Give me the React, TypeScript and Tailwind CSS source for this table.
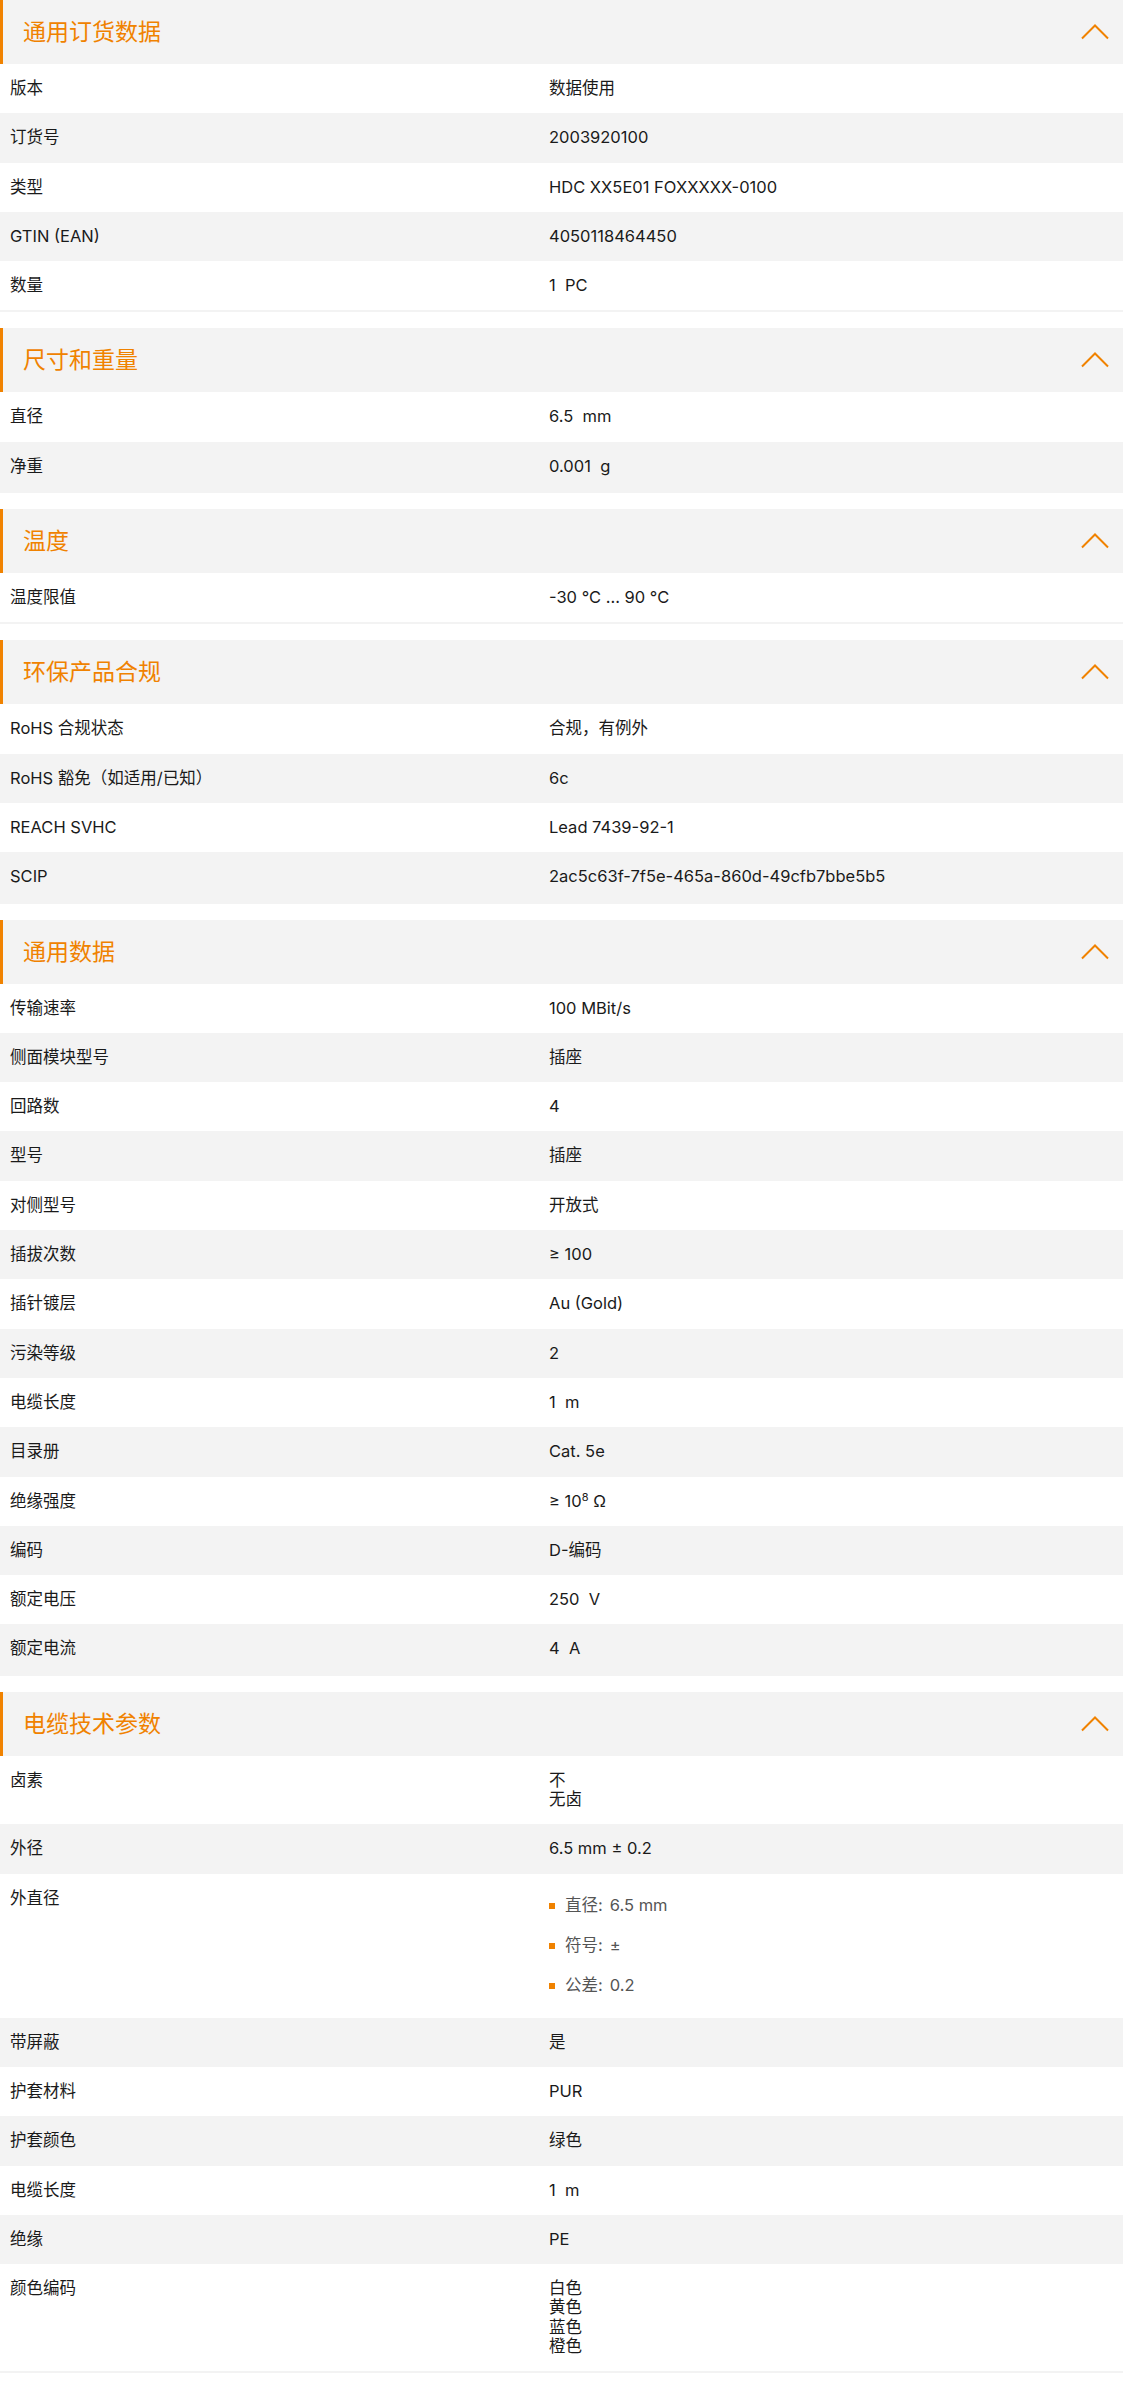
import React from "react";

type Row = { label: string; value: React.ReactNode };
type Section = { title: string; rows: Row[] };

const List = ({ items }: { items: [string, string][] }) => (
  <ul className="flex flex-col gap-[6px]">
    {items.map(([k, v]) => (
      <li key={k} className="h-[34px] flex items-center text-[#555]">
        <span className="w-[6px] h-[6px] bg-[#f08200] mr-[10px] shrink-0" />
        <span>{k}:</span>
        <span className="ml-[7px]">{v}</span>
      </li>
    ))}
  </ul>
);

const Lines = ({ lines }: { lines: string[] }) => (
  <div className="flex flex-col">
    {lines.map((l) => (
      <span key={l}>{l}</span>
    ))}
  </div>
);

const sections: Section[] = [
  {
    title: "通用订货数据",
    rows: [
      { label: "版本", value: "数据使用" },
      { label: "订货号", value: "2003920100" },
      { label: "类型", value: "HDC XX5E01 FOXXXXX-0100" },
      { label: "GTIN (EAN)", value: "4050118464450" },
      { label: "数量", value: "1\u00a0 PC" },
    ],
  },
  {
    title: "尺寸和重量",
    rows: [
      { label: "直径", value: "6.5\u00a0 mm" },
      { label: "净重", value: "0.001\u00a0 g" },
    ],
  },
  {
    title: "温度",
    rows: [{ label: "温度限值", value: "-30 °C ... 90 °C" }],
  },
  {
    title: "环保产品合规",
    rows: [
      { label: "RoHS 合规状态", value: "合规，有例外" },
      { label: "RoHS 豁免（如适用/已知）", value: "6c" },
      { label: "REACH SVHC", value: "Lead 7439-92-1" },
      { label: "SCIP", value: "2ac5c63f-7f5e-465a-860d-49cfb7bbe5b5" },
    ],
  },
  {
    title: "通用数据",
    rows: [
      { label: "传输速率", value: "100 MBit/s" },
      { label: "侧面模块型号", value: "插座" },
      { label: "回路数", value: "4" },
      { label: "型号", value: "插座" },
      { label: "对侧型号", value: "开放式" },
      { label: "插拔次数", value: "≥ 100" },
      { label: "插针镀层", value: "Au (Gold)" },
      { label: "污染等级", value: "2" },
      { label: "电缆长度", value: "1\u00a0 m" },
      { label: "目录册", value: "Cat. 5e" },
      {
        label: "绝缘强度",
        value: (
          <span>
            ≥ 10<sup className="text-[11px]">8</sup> Ω
          </span>
        ),
      },
      { label: "编码", value: "D-编码" },
      { label: "额定电压", value: "250\u00a0 V" },
      { label: "额定电流", value: "4\u00a0 A" },
    ],
  },
  {
    title: "电缆技术参数",
    rows: [
      { label: "卤素", value: <Lines lines={["不", "无卤"]} /> },
      { label: "外径", value: "6.5 mm ± 0.2" },
      {
        label: "外直径",
        value: (
          <List
            items={[
              ["直径", "6.5 mm"],
              ["符号", "±"],
              ["公差", "0.2"],
            ]}
          />
        ),
      },
      { label: "带屏蔽", value: "是" },
      { label: "护套材料", value: "PUR" },
      { label: "护套颜色", value: "绿色" },
      { label: "电缆长度", value: "1\u00a0 m" },
      { label: "绝缘", value: "PE" },
      { label: "颜色编码", value: <Lines lines={["白色", "黄色", "蓝色", "橙色"]} /> },
    ],
  },
];

function Chevron() {
  return (
    <svg width="28" height="16" viewBox="0 0 28 16" fill="none">
      <polyline points="1,14.5 14,1.5 27,14.5" stroke="#f08200" strokeWidth="2" />
    </svg>
  );
}

export default function App() {
  return (
    <div
      className="w-full bg-white text-[16.5px] leading-[19.3px] text-[#1a1a1a]"
      style={{ fontFamily: "Inter, 'Noto Sans CJK SC', sans-serif" }}
    >
      {sections.map((s) => (
        <div key={s.title} className="mb-4 border-b-2 border-[#f3f3f3]">
          <div className="h-16 bg-[#f3f3f3] border-l-[3px] border-[#f08200] flex items-center justify-between pl-5 pr-[14px]">
            <h2 className="text-[23px] leading-[28px] text-[#f08200]">{s.title}</h2>
            <Chevron />
          </div>
          {s.rows.map((r, i) => (
            <div
              key={r.label + i}
              className={`flex items-start py-[15px] ${i % 2 === 1 ? "bg-[#f3f3f3]" : "bg-white"}`}
            >
              <div className="w-[549px] pl-[10px] shrink-0">{r.label}</div>
              <div className="flex-1">{r.value}</div>
            </div>
          ))}
        </div>
      ))}
    </div>
  );
}
